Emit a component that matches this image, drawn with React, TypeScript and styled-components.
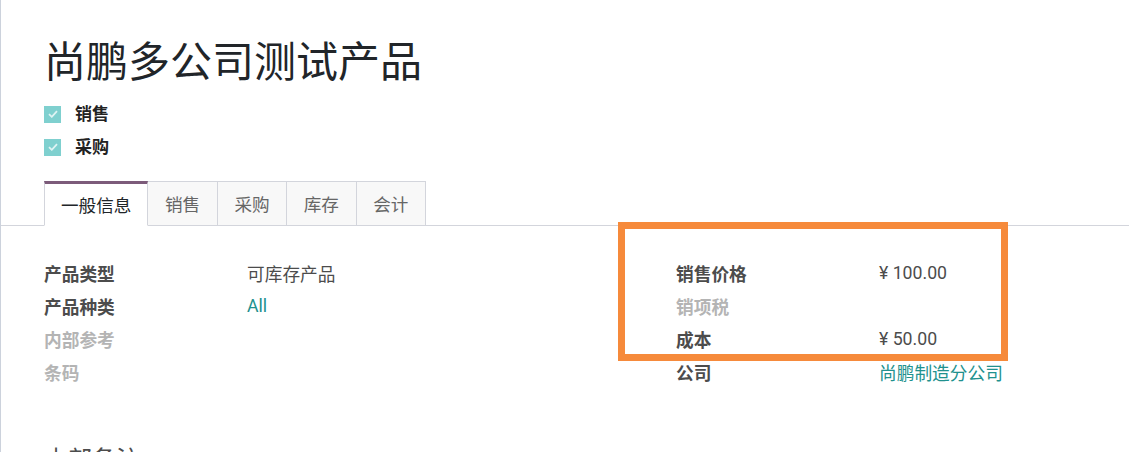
import React from 'react'
import styled, { createGlobalStyle } from 'styled-components'

const GlobalStyle = createGlobalStyle`
  html, body {
    margin: 0;
    padding: 0;
    background: #ffffff;
  }
  body {
    font-family: Roboto, "Noto Sans CJK SC", sans-serif;
    color: #4c4c4c;
    overflow: hidden;
  }
`

const Sheet = styled.div`
  position: relative;
  width: 1129px;
  height: 452px;
  border-left: 1px solid #ccd2dc;
  box-sizing: border-box;
  overflow: hidden;
`

const Header = styled.div`
  padding: 36px 0 0 43px;
`

const Title = styled.h1`
  margin: 0;
  font-size: 42px;
  line-height: 54px;
  font-weight: 400;
  color: #212529;
`

const CheckList = styled.div`
  display: flex;
  flex-direction: column;
  gap: 9px;
  margin-top: 12px;
`

const CheckRow = styled.div`
  display: flex;
  align-items: center;
  gap: 14px;
  height: 24px;
  line-height: 24px;
`

const CheckBox = styled.span`
  width: 17px;
  height: 17px;
  background: #7fd0cf;
  display: flex;
  align-items: center;
  justify-content: center;
`

const CheckLabel = styled.span`
  font-size: 17px;
  font-weight: 700;
  color: #222;
`

const Tabs = styled.ul`
  display: flex;
  list-style: none;
  margin: 22px 0 0;
  padding: 0 0 0 43px;
  border-bottom: 1px solid #d3d5dc;
`

const Tab = styled.li<{ $active?: boolean }>`
  height: 45px;
  box-sizing: border-box;
  padding: 0 ${p => (p.$active ? '16px' : '16.6px')};
  display: flex;
  align-items: center;
  font-size: 17.6px;
  margin-bottom: -1px;
  color: ${p => (p.$active ? '#212529' : '#666')};
  background: ${p => (p.$active ? '#ffffff' : '#f8f8f8')};
  border: 1px solid #d3d5dc;
  border-left-width: ${p => (p.$active ? '1px' : '0')};
  border-top: ${p => (p.$active ? '3px solid #7c5b7a' : '1px solid #d3d5dc')};
  border-bottom-color: ${p => (p.$active ? '#ffffff' : '#d3d5dc')};
`

const Groups = styled.div`
  display: grid;
  grid-template-columns: 632px 1fr;
  padding: 30px 0 0 43px;
`

const Group = styled.div`
  display: flex;
  flex-direction: column;
`

const FieldRow = styled.div`
  display: grid;
  grid-template-columns: 203px 1fr;
  height: 33px;
  align-items: center;
  font-size: 17.7px;
`

const Label = styled.span<{ $muted?: boolean }>`
  font-weight: 700;
  color: ${p => (p.$muted ? '#b4b4b4' : '#4c4c4c')};
`

const Value = styled.span<{ $link?: boolean }>`
  color: ${p => (p.$link ? '#21918e' : '#4c4c4c')};
`

const NotesTitle = styled.h2`
  margin: 52px 0 0 43px;
  font-size: 24px;
  font-weight: 400;
  color: #4c4c4c;
`

const Highlight = styled.div`
  position: absolute;
  left: 617px;
  top: 222px;
  width: 390px;
  height: 139px;
  box-sizing: border-box;
  border: 7px solid #f68a3b;
  pointer-events: none;
`

const Check = () => (
  <svg width="10" height="8" viewBox="0 0 10 8">
    <path d="M1 4.2 L3.8 6.8 L9 1.2" fill="none" stroke="#ffffff" strokeOpacity="0.75" strokeWidth="1.8" />
  </svg>
)

type Field = { label: string; value?: string; muted?: boolean; link?: boolean }

const leftFields: Field[] = [
  { label: '产品类型', value: '可库存产品' },
  { label: '产品种类', value: 'All', link: true },
  { label: '内部参考', muted: true },
  { label: '条码', muted: true },
]

const rightFields: Field[] = [
  { label: '销售价格', value: '¥ 100.00' },
  { label: '销项税', muted: true },
  { label: '成本', value: '¥ 50.00' },
  { label: '公司', value: '尚鹏制造分公司', link: true },
]

const renderFields = (fields: Field[]) =>
  fields.map(f => (
    <FieldRow key={f.label}>
      <Label $muted={f.muted}>{f.label}</Label>
      <Value $link={f.link}>{f.value}</Value>
    </FieldRow>
  ))

export default function App() {
  return (
    <>
      <GlobalStyle />
      <Sheet>
        <Header>
          <Title>尚鹏多公司测试产品</Title>
          <CheckList>
            <CheckRow>
              <CheckBox>
                <Check />
              </CheckBox>
              <CheckLabel>销售</CheckLabel>
            </CheckRow>
            <CheckRow>
              <CheckBox>
                <Check />
              </CheckBox>
              <CheckLabel>采购</CheckLabel>
            </CheckRow>
          </CheckList>
        </Header>
        <Tabs>
          <Tab $active>一般信息</Tab>
          <Tab>销售</Tab>
          <Tab>采购</Tab>
          <Tab>库存</Tab>
          <Tab>会计</Tab>
        </Tabs>
        <Groups>
          <Group>{renderFields(leftFields)}</Group>
          <Group>{renderFields(rightFields)}</Group>
        </Groups>
        <NotesTitle>内部备注</NotesTitle>
        <Highlight />
      </Sheet>
    </>
  )
}
